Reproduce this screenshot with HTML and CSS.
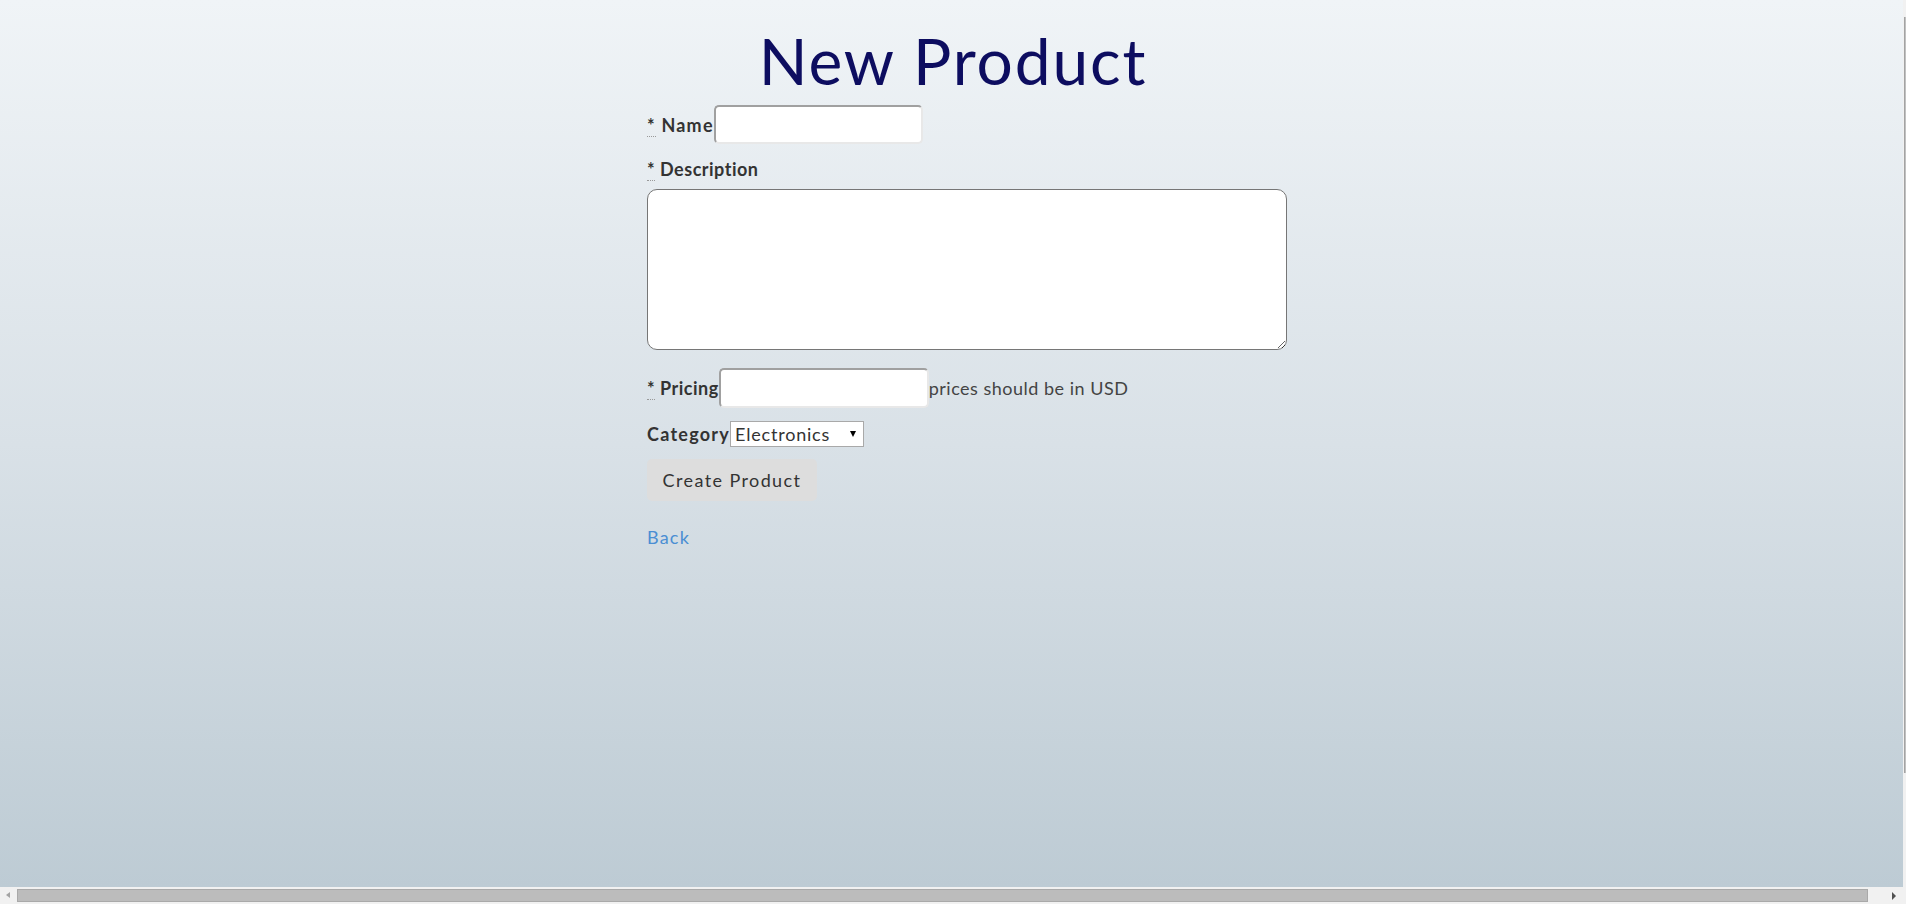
FILE: index.html
```html
<!DOCTYPE html>
<html lang="en">
<head>
<meta charset="utf-8">
<title>New Product</title>
<link rel="stylesheet" href="styles.css">
</head>
<body>
<div class="page">
  <h1 class="title">New Product</h1>
  <form class="form">
    <div class="row inline">
      <label class="label label-name" for="name"><abbr class="req" title="required">*</abbr> Name</label>
      <input class="text-input" id="name" type="text">
    </div>
    <div class="row stacked">
      <label class="label label-desc" for="desc"><abbr class="req" title="required">*</abbr> Description</label>
      <textarea class="textarea" id="desc"></textarea>
    </div>
    <div class="row inline pricing">
      <label class="label label-price" for="price"><abbr class="req" title="required">*</abbr> Pricing</label>
      <input class="text-input price-input" id="price" type="text">
      <span class="hint">prices should be in USD</span>
    </div>
    <div class="row inline category">
      <label class="label label-cat" for="cat">Category</label>
      <span class="select-wrap">
        <select class="select" id="cat"><option>Electronics</option></select>
      </span>
    </div>
    <button class="btn" type="button">Create Product</button>
    <a class="back" href="#">Back</a>
  </form>
</div>
<div class="hscroll">
  <span class="arrow-left"></span>
  <span class="hthumb"></span>
  <span class="arrow-right"></span>
</div>
<div class="vscroll">
  <span class="vthumb"></span>
</div>
</body>
</html>
```
FILE: styles.css
```css
html {
  background: #f1f1f1;
  overflow: hidden;
}
body {
  margin: 0;
  height: 887px;
  font-family: Lato, "Open Sans", sans-serif;
  color: #333;
  background: linear-gradient(to bottom, #f0f4f7 0%, #d9e1e7 50%, #bdcbd4 100%);
}
.page {
  width: 612px;
  margin: 0 auto;
  padding-top: 29px;
}
.title {
  margin: 0;
  font-size: 64px;
  line-height: 64px;
  font-weight: 400;
  letter-spacing: 1.9px;
  color: #0d0d60;
  text-align: center;
  white-space: nowrap;
}
.form {
  margin-top: 12px;
}
.row.inline {
  display: flex;
  align-items: center;
}
.label {
  font-weight: 700;
  font-size: 18px;
  line-height: 22px;
  letter-spacing: 0.8px;
  white-space: nowrap;
  color: #333;
}
.label-name {
  letter-spacing: 1.2px;
}
.label-desc,
.label-price {
  letter-spacing: 0.5px;
}
.label-cat {
  letter-spacing: 1.25px;
}
.req {
  font-weight: 700;
  text-decoration: none;
  border-bottom: 1px dotted #999;
}
.text-input {
  box-sizing: border-box;
  width: 209px;
  height: 39px;
  margin: 0;
  padding: 0 4px;
  border: 2px solid;
  border-color: #a0a0a0 #e8e8e8 #e8e8e8 #a0a0a0;
  border-radius: 5px;
  background: #fff;
  font: 18px Lato, sans-serif;
}
.stacked {
  margin-top: 14px;
}
.stacked .label {
  display: block;
}
.textarea {
  display: block;
  box-sizing: border-box;
  margin: 9px 0 0;
  width: 640px;
  height: 161px;
  border: 1px solid #767676;
  border-radius: 10px;
  background: #fff;
}
.pricing {
  margin-top: 18px;
}
.price-input {
  width: 210px;
  height: 40px;
}
.hint {
  font-size: 18px;
  letter-spacing: 0.5px;
  color: #444;
  white-space: nowrap;
}
.category {
  margin-top: 13px;
}
.select-wrap {
  position: relative;
  display: inline-block;
  height: 26px;
}
.select {
  appearance: none;
  -webkit-appearance: none;
  box-sizing: border-box;
  width: 134px;
  height: 26px;
  margin: 0;
  padding: 0 0 0 4px;
  border: 1px solid #a9a9a9;
  border-radius: 0;
  background: #fff;
  font: 18px Lato, sans-serif;
  letter-spacing: 0.8px;
  color: #333;
}
.select-wrap::after {
  content: "";
  position: absolute;
  right: 8px;
  top: 10px;
  border-left: 3px solid transparent;
  border-right: 3px solid transparent;
  border-top: 6px solid #000;
}
.btn {
  display: block;
  margin-top: 12px;
  width: 170px;
  height: 42px;
  padding: 0;
  border: none;
  border-radius: 5px;
  background: #ddd;
  font: 18px Lato, sans-serif;
  letter-spacing: 1.4px;
  color: #333;
}
.back {
  display: block;
  width: max-content;
  margin-top: 25px;
  font-size: 18px;
  line-height: 22px;
  letter-spacing: 1.2px;
  color: #4a8ed3;
  text-decoration: none;
}
.hscroll {
  position: fixed;
  left: 0;
  bottom: 0;
  width: 1903px;
  height: 17px;
  background: #f1f1f1;
}
.arrow-left {
  position: absolute;
  left: 6px;
  top: 5px;
  border-top: 3.5px solid transparent;
  border-bottom: 3.5px solid transparent;
  border-right: 4px solid #a3a3a3;
}
.arrow-right {
  position: absolute;
  left: 1892px;
  top: 5px;
  border-top: 4px solid transparent;
  border-bottom: 4px solid transparent;
  border-left: 4px solid #505050;
}
.hthumb {
  position: absolute;
  left: 17px;
  top: 2px;
  box-sizing: border-box;
  width: 1851px;
  height: 13px;
  background: #bcbcbc;
  border: 1px solid #a9a9a9;
}
.vscroll {
  position: fixed;
  top: 0;
  left: 1903px;
  width: 3px;
  height: 904px;
  background: #f1f1f1;
}
.vthumb {
  position: absolute;
  left: 1px;
  top: 17px;
  box-sizing: border-box;
  width: 2px;
  height: 756px;
  background: #c1c1c1;
  border-left: 1px solid #a3a3a3;
}
```
